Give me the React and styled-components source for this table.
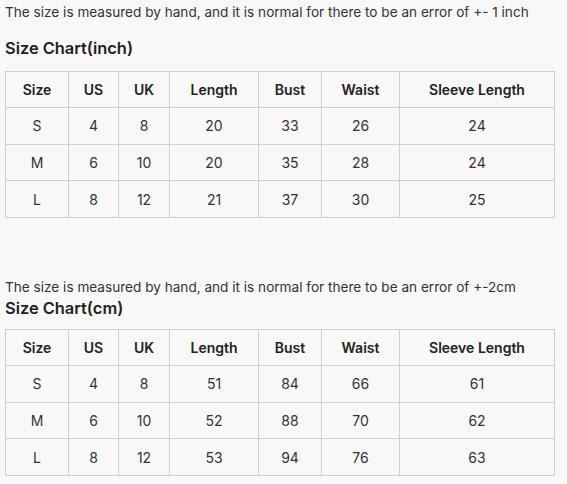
import styled, { createGlobalStyle } from 'styled-components';

const Global = createGlobalStyle`
  html, body {
    margin: 0;
    padding: 0;
    background: #f8f8f8;
  }
  body {
    font-family: Inter, "Noto Sans", sans-serif;
    color: #222;
  }
`;

/* ============ STYLED ============ */

const Page = styled.div`
  width: 567px;
  padding: 3px 5px 0 5px;
  box-sizing: border-box;
  display: flex;
  flex-direction: column;
`;

const Section = styled.section`
  display: flex;
  flex-direction: column;
  margin-top: ${({ $top }) => $top || 0}px;
`;

const Note = styled.p`
  margin: 0;
  font-size: 13.6px;
  line-height: 18px;
  color: #333;
`;

const Heading = styled.h3`
  margin: ${({ $gap }) => $gap}px 0 ${({ $after }) => $after}px 0;
  font-size: 16.4px;
  line-height: 20px;
  font-weight: 600;
  color: #222;
`;

const Table = styled.table`
  width: 550px;
  border-collapse: collapse;
  table-layout: fixed;
  font-size: 14px;
  color: #333;
`;

const Th = styled.th`
  height: 35px;
  padding: 0;
  border: 1px solid #cfcfcf;
  font-weight: 600;
  text-align: center;
  color: #222;
`;

const Td = styled.td`
  height: 35.7px;
  padding: 0;
  border: 1px solid #cfcfcf;
  text-align: center;
  font-weight: 400;
`;

/* ============ DATA ============ */

const COLS = [
  { label: 'Size', w: 63 },
  { label: 'US', w: 50 },
  { label: 'UK', w: 51 },
  { label: 'Length', w: 89 },
  { label: 'Bust', w: 63 },
  { label: 'Waist', w: 78 },
  { label: 'Sleeve Length', w: 155 },
];

const INCH = [
  ['S', 4, 8, 20, 33, 26, 24],
  ['M', 6, 10, 20, 35, 28, 24],
  ['L', 8, 12, 21, 37, 30, 25],
];

const CM = [
  ['S', 4, 8, 51, 84, 66, 61],
  ['M', 6, 10, 52, 88, 70, 62],
  ['L', 8, 12, 53, 94, 76, 63],
];

function Chart({ rows }) {
    return (
        <Table>
            <colgroup>
                {COLS.map((c) => (
                    <col key={c.label} style={{ width: c.w }} />
                ))}
            </colgroup>
            <thead>
                <tr>
                    {COLS.map((c) => (
                        <Th key={c.label}>{c.label}</Th>
                    ))}
                </tr>
            </thead>
            <tbody>
                {rows.map((r) => (
                    <tr key={r[0]}>
                        {r.map((v, i) => (
                            <Td key={i}>{v}</Td>
                        ))}
                    </tr>
                ))}
            </tbody>
        </Table>
    );
}

/* ============ COMPONENT ============ */

export default function App() {
    return (
        <>
            <Global />
            <Page>
                <Section>
                    <Note>The size is measured by hand, and it is normal for there to be an error of +- 1 inch</Note>
                    <Heading $gap={17} $after={13}>Size Chart(inch)</Heading>
                    <Chart rows={INCH} />
                </Section>
                <Section $top={60}>
                    <Note>The size is measured by hand, and it is normal for there to be an error of +-2cm</Note>
                    <Heading $gap={2} $after={11}>Size Chart(cm)</Heading>
                    <Chart rows={CM} />
                </Section>
            </Page>
        </>
    );
}
